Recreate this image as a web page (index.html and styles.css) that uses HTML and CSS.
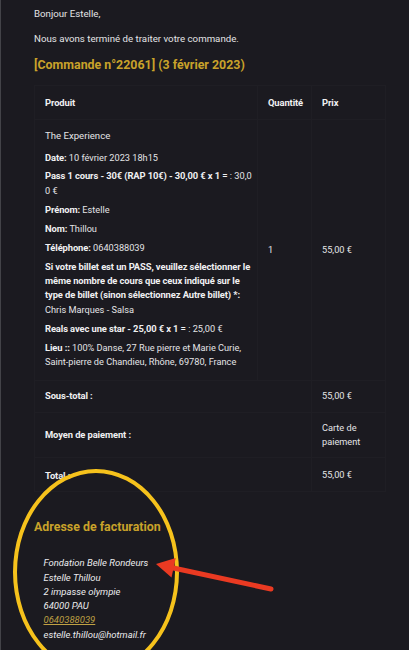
FILE: index.html
```html
<!DOCTYPE html>
<html lang="fr">
<head>
<meta charset="utf-8">
<link rel="stylesheet" href="styles.css">
</head>
<body>
<div class="page">
  <p class="intro first">Bonjour Estelle,</p>
  <p class="intro">Nous avons terminé de traiter votre commande.</p>
  <h2 class="order-title">[Commande n°22061] (3 février 2023)</h2>
  <table class="order">
    <colgroup>
      <col class="w-prod">
      <col class="w-qty">
      <col class="w-price">
    </colgroup>
    <thead>
      <tr>
        <th>Produit</th>
        <th>Quantité</th>
        <th>Prix</th>
      </tr>
    </thead>
    <tbody>
      <tr>
        <td class="c-prod">
          <div class="pname">The Experience</div>
          <ul class="meta">
            <li><b>Date:</b> 10 février 2023 18h15</li>
            <li><b>Pass 1 cours - 30€ (RAP 10€) - 30,00 € x 1 =</b> : 30,0<br>0 €</li>
            <li><b>Prénom:</b> Estelle</li>
            <li><b>Nom:</b> Thillou</li>
            <li><b>Téléphone:</b> 0640388039</li>
            <li><b>Si votre billet est un PASS, veuillez sélectionner le<br>même nombre de cours que ceux indiqué sur le<br>type de billet (sinon sélectionnez Autre billet) *:</b><br>Chris Marques - Salsa</li>
            <li><b>Reals avec une star - 25,00 € x 1 =</b> : 25,00 €</li>
            <li><b>Lieu ::</b> 100% Danse, 27 Rue pierre et Marie Curie,<br>Saint-pierre de Chandieu, Rhône, 69780, France</li>
          </ul>
        </td>
        <td>1</td>
        <td>55,00 €</td>
      </tr>
    </tbody>
    <tfoot>
      <tr>
        <th colspan="2">Sous-total :</th>
        <td>55,00 €</td>
      </tr>
      <tr>
        <th colspan="2">Moyen de paiement :</th>
        <td>Carte de<br>paiement</td>
      </tr>
      <tr class="total">
        <th colspan="2">Total :</th>
        <td>55,00 €</td>
      </tr>
    </tfoot>
  </table>
  <h2 class="addr-title">Adresse de facturation</h2>
  <address class="addr">
    Fondation Belle Rondeurs<br>
    Estelle Thillou<br>
    2 impasse olympie<br>
    64000 PAU<br>
    <a href="#">0640388039</a><br>
    estelle.thillou@hotmail.fr
  </address>
  <div class="circle"></div>
  <svg class="arrow" width="125" height="45" viewBox="0 0 125 45">
    <line x1="20" y1="17.5" x2="120" y2="39" stroke="#ea3a22" stroke-width="5" stroke-linecap="round"/>
    <polygon points="5,14 20.5,27.6 24.7,8" fill="#ea3a22"/>
  </svg>
</div>
</body>
</html>
```
FILE: styles.css
```css
html, body {
  margin: 0;
  padding: 0;
  background: #1b1a20;
}
body {
  font-family: Roboto, "Noto Sans", sans-serif;
  color: #e4e4e6;
  font-size: 9.7px;
  border-left: 1px solid #434348;
  height: 650px;
  box-sizing: border-box;
  overflow: hidden;
}
.page {
  position: relative;
  padding: 7px 26px 0 33px;
}
.intro {
  margin: 0 0 11px;
  line-height: 14px;
}
.order-title {
  margin: 0 0 12px;
  color: #c9a22a;
  font-size: 12.4px;
  font-weight: 700;
  line-height: 16px;
}
.order {
  width: 351px;
  table-layout: fixed;
  border-collapse: collapse;
  margin-bottom: 27px;
  font-size: 9.2px;
}
.order b, .order th {
  font-weight: 700;
  font-size: 9.4px;
  letter-spacing: -0.1px;
  color: #f0f0f2;
}
.w-prod { width: 223px; }
.w-qty { width: 54px; }
.w-price { width: 74px; }
.order th, .order td {
  border: 1px solid #1f1e24;
  padding: 9.5px 9px 9.5px 10px;
  text-align: left;
  vertical-align: middle;
  line-height: 14px;
}
.order td.c-prod {
  padding: 9px 9px 11px 10px;
}
.pname {
  font-size: 9.6px;
  line-height: 14px;
  margin: 0 0 7.5px;
}
.meta {
  list-style: none;
  margin: 0;
  padding: 0;
}
.meta li {
  margin: 0 0 4.7px;
  line-height: 14.3px;
  white-space: nowrap;
}
.meta li:last-child {
  margin: 0;
}
.order tfoot th, .order tfoot td {
  padding: 8px 9px 8px 10px;
}
.order tfoot .total th, .order tfoot .total td {
  padding-top: 10px;
}
.order tfoot td {
  line-height: 14.4px;
  font-size: 9.2px;
}
.addr-title {
  margin: 0 0 21.5px;
  color: #c9a22a;
  font-size: 12.4px;
  font-weight: 700;
  line-height: 16px;
}
.addr {
  font-style: italic;
  font-size: 9.5px;
  line-height: 14.3px;
  padding-left: 9.5px;
  color: #ececee;
}
.addr a {
  color: #bfa043;
  text-decoration: underline;
}
.circle {
  position: absolute;
  left: 12px;
  top: 469px;
  width: 166px;
  height: 206px;
  border: 4px solid #f6c21c;
  border-radius: 50%;
  box-sizing: border-box;
}
.arrow {
  position: absolute;
  left: 150px;
  top: 550px;
}
```
